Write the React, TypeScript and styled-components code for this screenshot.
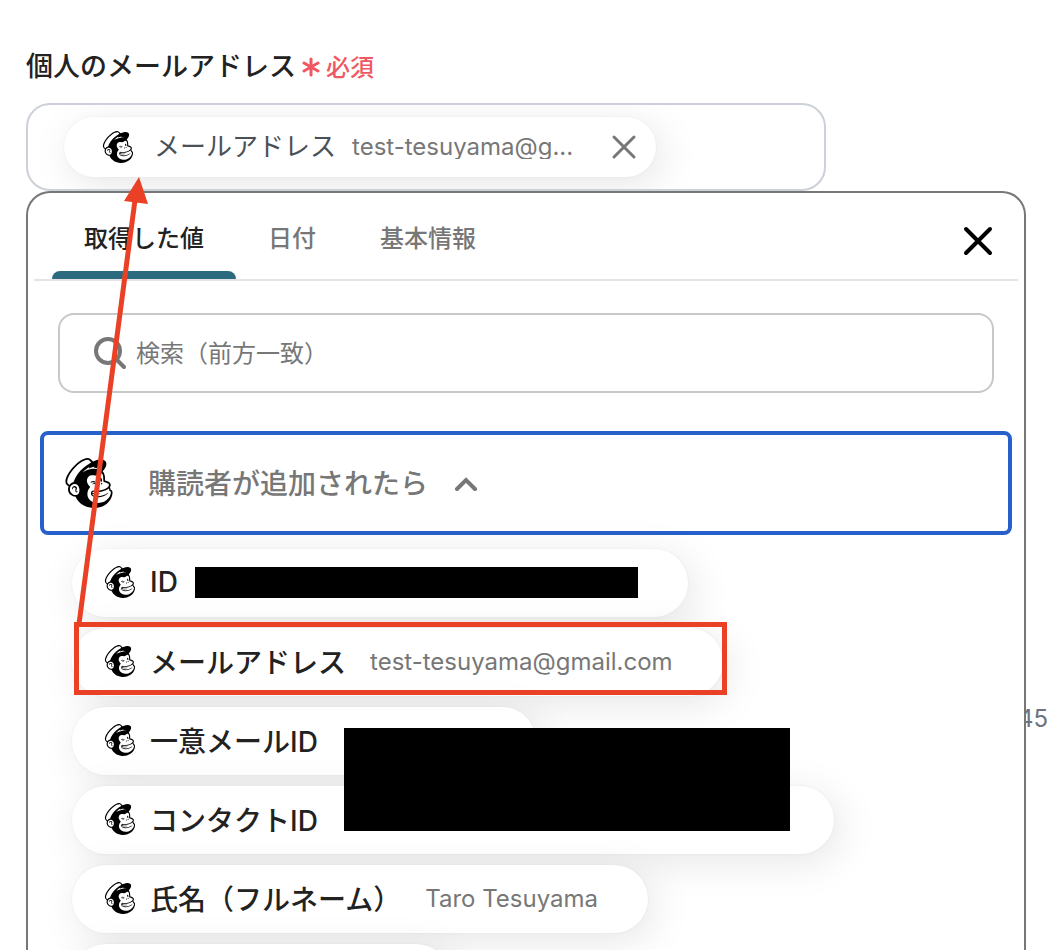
import React from "react";
import styled, { createGlobalStyle } from "styled-components";
import { SiMailchimp } from "react-icons/si";

const GlobalStyle = createGlobalStyle`
  *, *::before, *::after { box-sizing: border-box; }
  body {
    margin: 0;
    background: #fff;
    color: #222;
    font-family: Inter, "Noto Sans CJK JP", sans-serif;
  }
  button, input { font: inherit; color: inherit; }
`;

const Page = styled.main`
  position: relative;
  display: flex;
  flex-direction: column;
  height: 100vh;
  overflow: hidden;
  padding: 42px 36px 0 26px;
`;

const FieldLabel = styled.div`
  display: flex;
  align-items: center;
  gap: 6px;
  height: 44px;
  font-size: 27px;
  font-weight: 500;
`;

const Required = styled.span`
  display: flex;
  align-items: center;
  gap: 6px;
  padding-top: 2px;
  color: #ef5863;
  font-size: 24px;

  svg { margin-top: 4px; }
`;

const Field = styled.div`
  display: flex;
  align-items: center;
  width: 80%;
  height: 88px;
  margin-top: 17px;
  padding: 0 36px;
  border: 2px solid #ccd1d9;
  border-radius: 24px;
  overflow: hidden;
  flex-shrink: 0;
`;

const pillShadow = "0 0 3px rgba(0, 0, 0, 0.05), 6px 8px 40px rgba(0, 0, 0, 0.1)";

const Chip = styled.div`
  display: flex;
  align-items: center;
  height: 60px;
  padding: 0 18px 0 38px;
  border-radius: 30px;
  background: #fff;
  box-shadow: ${pillShadow};
`;

const ChipName = styled.span`
  margin-left: 20px;
  color: #4b5058;
  font-size: 26px;
  line-height: 36px;
`;

const Value = styled.span`
  margin-left: 24px;
  color: #777;
  font-size: 24px;
  font-weight: 400;
`;

const ChipValue = styled(Value)`
  width: 234px;
  margin-left: 16px;
  line-height: 24px;
  overflow: hidden;
  white-space: nowrap;
`;

const IconButton = styled.button<{ $color: string }>`
  display: flex;
  padding: 0;
  border: 0;
  background: none;
  color: ${(p) => p.$color};
  cursor: pointer;
`;

const ChipRemove = styled(IconButton)`
  margin-left: 24px;
`;

const Panel = styled.section`
  position: relative;
  flex: 1 0 auto;
  border: 2px solid #777;
  border-bottom: 0;
  border-radius: 24px 24px 0 0;
  background: #fff;
`;

const PanelHeader = styled.div`
  display: flex;
  align-items: center;
  justify-content: space-between;
  height: 88px;
  margin: 0 6px;
  padding: 0 24px 0 18px;
  border-bottom: 2px solid #e4e4e4;
`;

const PanelClose = styled(IconButton)`
  margin-top: 10px;
`;

const Tabs = styled.div`
  display: flex;
  align-self: stretch;
`;

const Tab = styled.button<{ $active?: boolean }>`
  display: flex;
  flex-direction: column;
  justify-content: space-between;
  padding: 28px 0 0;
  border: 0;
  background: none;
  color: ${(p) => (p.$active ? "#222" : "#777")};
  font-size: 24px;
  font-weight: 500;
  line-height: 36px;
  cursor: pointer;

  &::after {
    content: "";
    width: 100%;
    height: 8px;
    border-radius: 8px 8px 0 0;
    background: ${(p) => (p.$active ? "#2c6a80" : "transparent")};
  }
`;

const TabText = styled.span`
  padding: 0 32px;
`;

const SearchBox = styled.label`
  display: flex;
  align-items: center;
  gap: 8px;
  height: 80px;
  margin: 32px 30px 0;
  padding: 0 34px;
  border: 2px solid #c8c8c8;
  border-radius: 16px;
  color: #777;
`;

const SearchInput = styled.input`
  flex: 1;
  min-width: 0;
  padding: 0;
  border: 0;
  outline: 0;
  background: none;
  font-size: 24px;
  &::placeholder { color: #777; opacity: 1; }
`;

const GroupToggle = styled.button`
  display: flex;
  align-items: center;
  width: calc(100% - 24px);
  height: 104px;
  margin: 38px 12px 0;
  padding: 0 20px;
  border: 4px solid #2860cb;
  border-radius: 8px;
  background: #fff;
  color: #777;
  font-size: 28px;
  font-weight: 500;
  cursor: pointer;
`;

const GroupName = styled.span`
  margin: 0 26px 2px 34px;
`;

const ItemList = styled.ul`
  display: flex;
  flex-direction: column;
  align-items: flex-start;
  gap: 11px;
  height: 401px;
  margin: 14px 0 0;
  padding: 0 44px;
  list-style: none;
`;

const Item = styled.li<{ $width?: number }>`
  flex-shrink: 0;
  width: ${(p) => (p.$width ? `${p.$width}px` : "auto")};
  border-radius: 34px;
  background: #fff;
  box-shadow: ${pillShadow};
`;

const ItemButton = styled.button`
  display: flex;
  align-items: center;
  height: 68px;
  padding: 0 50px 2px 32px;
  border: 0;
  background: none;
  font-size: 28px;
  font-weight: 500;
  white-space: nowrap;
  cursor: pointer;
`;

const ItemName = styled.span`
  margin-left: 14px;
`;

const InlineMask = styled.span`
  width: 443px;
  height: 31px;
  margin-left: 17px;
  background: #000;
`;

const BlockMask = styled.div`
  position: absolute;
  left: 316px;
  top: 535px;
  width: 446px;
  height: 103px;
  background: #000;
`;

const BackgroundCount = styled.span`
  position: absolute;
  right: 14px;
  top: 704px;
  color: #6d7480;
  font-size: 24px;
  line-height: 30px;
`;

const Highlight = styled.div`
  position: absolute;
  left: 74px;
  top: 622px;
  width: 653px;
  height: 73px;
  border: 5px solid #ea4025;
`;

const Arrow = styled.svg`
  position: absolute;
  left: 70px;
  top: 170px;
  pointer-events: none;
`;

const Freddie = ({ size }: { size: number }) => <SiMailchimp size={size} color="#000" aria-hidden />;

const Cross = ({ size, stroke }: { size: number; stroke: number }) => (
  <svg width={size} height={size} viewBox={`0 0 ${size} ${size}`} fill="none" stroke="currentColor" strokeWidth={stroke} strokeLinecap="round" aria-hidden>
    <path d={`M4 4L${size - 4} ${size - 4}M${size - 4} 4L4 ${size - 4}`} />
  </svg>
);

type Entry = { id: string; name?: string; value?: string; width?: number; masked?: boolean };

const entries: Entry[] = [
  { id: "id", name: "ID", masked: true },
  { id: "email", name: "メールアドレス", value: "test-tesuyama@gmail.com" },
  { id: "unique", name: "一意メールID", width: 464 },
  { id: "contact", name: "コンタクトID", width: 762 },
  { id: "fullname", name: "氏名（フルネーム）", value: "Taro Tesuyama" },
  { id: "next", width: 378 },
];

export default function App() {
  return (
    <>
      <GlobalStyle />
      <Page>
        <FieldLabel>
          個人のメールアドレス
          <Required>
            <svg width="18" height="20" viewBox="0 0 18 20" fill="none" stroke="currentColor" strokeWidth="3" strokeLinecap="round" aria-hidden>
              <path d="M9 2V18M2 6L16 14M16 6L2 14" />
            </svg>
            必須
          </Required>
        </FieldLabel>
        <Field>
          <Chip>
            <Freddie size={32} />
            <ChipName>メールアドレス</ChipName>
            <ChipValue>test-tesuyama@g...</ChipValue>
            <ChipRemove type="button" $color="#777" aria-label="削除">
              <Cross size={28} stroke={3} />
            </ChipRemove>
          </Chip>
        </Field>
        <BackgroundCount>45</BackgroundCount>
        <Panel>
          <PanelHeader>
            <Tabs role="tablist">
              <Tab type="button" role="tab" aria-selected $active><TabText>取得した値</TabText></Tab>
              <Tab type="button" role="tab" aria-selected={false}><TabText>日付</TabText></Tab>
              <Tab type="button" role="tab" aria-selected={false}><TabText>基本情報</TabText></Tab>
            </Tabs>
            <PanelClose type="button" $color="#000" aria-label="閉じる">
              <Cross size={32} stroke={4} />
            </PanelClose>
          </PanelHeader>
          <SearchBox>
            <svg width="34" height="34" viewBox="0 0 34 34" fill="none" stroke="currentColor" strokeWidth="4" strokeLinecap="round" aria-hidden>
              <circle cx="14" cy="15" r="12" />
              <path d="M23 24L30 31" />
            </svg>
            <SearchInput type="search" aria-label="検索" placeholder="検索（前方一致）" />
          </SearchBox>
          <GroupToggle type="button" aria-expanded>
            <Freddie size={50} />
            <GroupName>購読者が追加されたら</GroupName>
            <svg width="24" height="16" viewBox="0 0 24 16" fill="none" stroke="currentColor" strokeWidth="4" strokeLinecap="round" aria-hidden>
              <path d="M3 14L12 5L21 14" />
            </svg>
          </GroupToggle>
          <ItemList>
            {entries.map((e) => (
              <Item key={e.id} $width={e.width}>
                <ItemButton type="button">
                  <Freddie size={32} />
                  {e.name && <ItemName>{e.name}</ItemName>}
                  {e.masked && <InlineMask />}
                  {e.value && <Value>{e.value}</Value>}
                </ItemButton>
              </Item>
            ))}
          </ItemList>
          <BlockMask />
        </Panel>
        <Highlight />
        <Arrow width="90" height="460" viewBox="0 0 90 460" aria-hidden>
          <path d="M9 454L65 30" stroke="#ea4025" strokeWidth="5" fill="none" />
          <path d="M69 7L54 31L78 34Z" fill="#ea4025" />
        </Arrow>
      </Page>
    </>
  );
}
